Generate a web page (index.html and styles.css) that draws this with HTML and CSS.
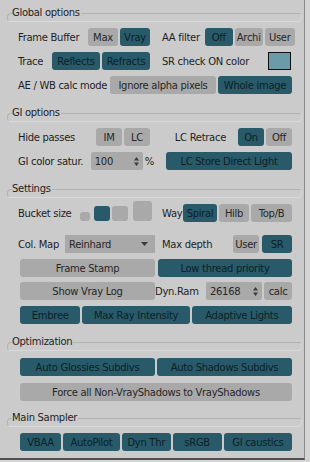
FILE: index.html
```html
<!DOCTYPE html>
<html>
<head>
<meta charset="utf-8">
<link rel="stylesheet" href="styles.css">
</head>
<body>
<div class="panel">

  <div class="group g-global">
    <div class="ghead"><span>Global options</span></div>
    <div class="row two">
      <div class="half">
        <span class="lbl">Frame Buffer</span>
        <div class="btns"><span class="btn w30">Max</span><span class="btn on w30">Vray</span></div>
      </div>
      <div class="half right">
        <span class="lbl mr5">AA filter</span>
        <div class="btns"><span class="btn on w28">Off</span><span class="btn w28">Archi</span><span class="btn w30">User</span></div>
      </div>
    </div>
    <div class="row two">
      <div class="half">
        <span class="lbl">Trace</span>
        <div class="btns"><span class="btn on w48">Reflects</span><span class="btn on w48">Refracts</span></div>
      </div>
      <div class="half">
        <span class="lbl">SR check ON color</span>
        <span class="swatch"></span>
      </div>
    </div>
    <div class="row">
      <span class="lbl">AE / WB calc mode</span>
      <div class="btns push"><span class="btn w106">Ignore alpha pixels</span><span class="btn on w74">Whole image</span></div>
    </div>
  </div>

  <div class="group g-gi">
    <div class="ghead"><span>GI options</span></div>
    <div class="row two">
      <div class="half">
        <span class="lbl">Hide passes</span>
        <div class="btns"><span class="btn w26">IM</span><span class="btn w26">LC</span></div>
      </div>
      <div class="half right">
        <span class="lbl mr12">LC Retrace</span>
        <div class="btns"><span class="btn on w26">On</span><span class="btn w26">Off</span></div>
      </div>
    </div>
    <div class="row two">
      <div class="half">
        <span class="lbl">GI color satur.</span>
        <div class="spinwrap">
          <span class="spin w52"><span class="val">100</span><svg class="arr" width="5" height="9" viewBox="0 0 5 9"><path d="M2.5 0L5 3.5H0Z M2.5 9L5 5.5H0Z" fill="#3a3a3a"/></svg></span>
          <span class="pct">%</span>
        </div>
      </div>
      <div class="half right">
        <span class="btn on w126">LC Store Direct Light</span>
      </div>
    </div>
  </div>

  <div class="group g-set">
    <div class="ghead"><span>Settings</span></div>
    <div class="row two">
      <div class="half">
        <span class="lbl">Bucket size</span>
        <div class="squares">
          <span class="sq s1"></span><span class="sq s2 on"></span><span class="sq s3"></span><span class="sq s4"></span>
        </div>
      </div>
      <div class="half">
        <span class="lbl">Way</span>
        <div class="btns"><span class="btn on w34">Spiral</span><span class="btn w30">Hilb</span><span class="btn w41">Top/B</span></div>
      </div>
    </div>
    <div class="row two r-col">
      <div class="half">
        <span class="lbl">Col. Map</span>
        <span class="drop"><span class="val">Reinhard</span><svg width="7" height="4" viewBox="0 0 7 4"><path d="M0 0H7L3.5 4Z" fill="#3a3a3a"/></svg></span>
      </div>
      <div class="half">
        <span class="lbl">Max depth</span>
        <div class="btns g3"><span class="btn w26">User</span><span class="btn on w30">SR</span></div>
      </div>
    </div>
    <div class="row wide r-fs">
      <span class="btn w135">Frame Stamp</span>
      <span class="btn on w134">Low thread priority</span>
    </div>
    <div class="row wide r-log">
      <span class="btn w135">Show Vray Log</span>
      <div class="dyn">
        <span class="lbl">Dyn.Ram</span>
        <div class="btns g2">
          <span class="spin w56"><span class="val">26168</span><svg class="arr" width="5" height="9" viewBox="0 0 5 9"><path d="M2.5 0L5 3.5H0Z M2.5 9L5 5.5H0Z" fill="#3a3a3a"/></svg></span>
          <span class="btn w28">calc</span>
        </div>
      </div>
    </div>
    <div class="row wide btns r-emb">
      <span class="btn on w62">Embree</span><span class="btn on w110">Max Ray Intensity</span><span class="btn on w103">Adaptive Lights</span>
    </div>
  </div>

  <div class="group g-opt">
    <div class="ghead"><span>Optimization</span></div>
    <div class="row wide btns r-o1">
      <span class="btn on grow">Auto Glossies Subdivs</span><span class="btn on grow">Auto Shadows Subdivs</span>
    </div>
    <div class="row wide btns r-o2">
      <span class="btn grow">Force all Non-VrayShadows to VrayShadows</span>
    </div>
  </div>

  <div class="group g-main">
    <div class="ghead"><span>Main Sampler</span></div>
    <div class="row wide btns r-ms">
      <span class="btn on w42">VBAA</span><span class="btn on w58">AutoPilot</span><span class="btn on w50">Dyn Thr</span><span class="btn on w50">sRGB</span><span class="btn on w70">GI caustics</span>
    </div>
  </div>

</div>
</body>
</html>
```

FILE: styles.css
```css
* { box-sizing: border-box; }
html, body { margin: 0; padding: 0; }
body {
  width: 310px;
  height: 462px;
  background: #d4d4d4;
  font-family: "DejaVu Sans", Verdana, sans-serif;
  font-size: 10px;
  letter-spacing: -0.3px;
  color: #222;
  overflow: hidden;
}
.panel {
  width: 305px;
  height: 460px;
  background: #cbcbcb;
  border-right: 1px solid #8a8a8a;
  border-bottom: 2px solid #505050;
  padding-top: 13px;
}
.ghead {
  position: relative;
  height: 9px;
  margin: 0 2px 0 7px;
  border: 1px solid #b2b2b2;
  border-bottom-color: #dadada;
  border-right-color: #d6d6d6;
  border-radius: 4px;
}
.ghead span {
  position: absolute;
  left: 4px;
  top: -8px;
  line-height: 14px;
  background: #cbcbcb;
  padding: 0 1px 0 0;
  color: #1e1e1e;
}
.g-gi { margin-top: 19px; }
.g-set { margin-top: 19px; }
.g-opt { margin-top: 18px; }
.g-main { margin-top: 17px; }

.row {
  display: flex;
  align-items: center;
  height: 18px;
  margin-top: 6px;
  padding-left: 18px;
  padding-right: 12px;
}
.row.two { gap: 12px; }
.row.wide { padding-left: 20px; justify-content: space-between; }
.push { margin-left: auto; }
.half {
  flex: 1 1 0;
  display: flex;
  align-items: center;
  justify-content: space-between;
  height: 18px;
}
.half:first-child { flex: 0 0 132px; }
.half.right { justify-content: flex-end; }
.lbl { white-space: nowrap; color: #1e1e1e; }
.mr5 { margin-right: 5px; }
.mr12 { margin-right: 12px; }
.btns { display: flex; gap: 2px; align-items: center; }
.btns.g3 { gap: 3px; }
.row.btns { gap: 2px; }
.btn {
  display: flex;
  align-items: center;
  justify-content: center;
  height: 18px;
  border-radius: 3px;
  background: #a9a9a9;
  color: #262626;
  white-space: nowrap;
  overflow: hidden;
}
.btn.on { background: #285a6a; color: #0c1f26; }
.grow { flex: 1 1 0; }
.w26 { width: 26px; } .w28 { width: 28px; } .w30 { width: 30px; } .w34 { width: 34px; }
.w41 { width: 41px; } .w42 { width: 42px; } .w48 { width: 48px; } .w50 { width: 50px; }
.w52 { width: 52px; } .w56 { width: 56px; } .w58 { width: 58px; } .w62 { width: 62px; }
.w70 { width: 70px; } .w74 { width: 74px; } .w103 { width: 103px; } .w106 { width: 106px; }
.w110 { width: 110px; } .w126 { width: 126px; } .w134 { width: 134px; } .w135 { width: 135px; }

.swatch {
  width: 23px;
  height: 18px;
  background: #6b9aa8;
  border: 1px solid #111;
  margin-right: 1px;
}
.spinwrap { display: flex; align-items: center; gap: 2px; margin-left: auto; margin-right: -4px; }
.spin {
  display: flex;
  align-items: center;
  justify-content: space-between;
  height: 18px;
  background: #a9a9a9;
  border-radius: 2px;
  padding: 0 4px 0 4px;
  color: #262626;
}
.pct { color: #1e1e1e; }
.arr { display: block; }

.squares {
  display: flex;
  align-items: flex-end;
  height: 18px;
  gap: 2px;
  margin-right: -2px;
}
.sq { background: #a9a9a9; border-radius: 3px; display: block; }
.sq.on { background: #285a6a; }
.s1 { width: 10px; height: 9px; margin-right: 2px; margin-bottom: 1px; }
.s2 { width: 16px; height: 15px; margin-bottom: 1px; }
.s3 { width: 16px; height: 15px; margin-bottom: 1px; margin-right: 3px; }
.s4 { width: 19px; height: 20px; margin-bottom: 1px; }

.r-col { margin-top: 13px; }
.drop {
  display: flex;
  align-items: center;
  justify-content: space-between;
  width: 90px;
  height: 18px;
  background: #a9a9a9;
  padding: 0 7px 0 4px;
  margin-right: -5px;
  color: #262626;
}
.r-fs { margin-top: 6px; }
.r-log { margin-top: 5px; }
.dyn { display: flex; align-items: center; justify-content: space-between; width: 137px; }
.btns.g2 { gap: 2px; }
.r-emb { margin-top: 6px; }
.r-o1 { margin-top: 7px; padding-right: 12px; }
.r-o2 { margin-top: 7px; }
.r-ms { margin-top: 6px; justify-content: flex-start; }
```
